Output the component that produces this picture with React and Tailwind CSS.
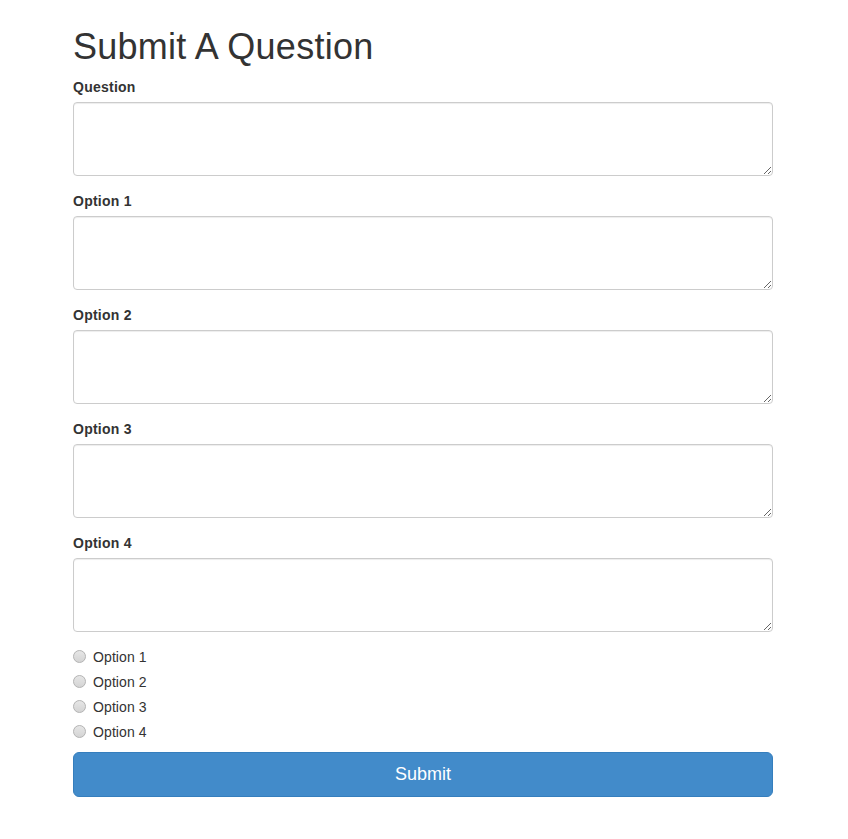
import React, { useState } from 'react';

const fields = ['Question', 'Option 1', 'Option 2', 'Option 3', 'Option 4'];
const choices = ['Option 1', 'Option 2', 'Option 3', 'Option 4'];

export default function App() {
  const [answer, setAnswer] = useState(null);

  return (
    <div className="min-h-screen bg-white text-[#333] font-['Liberation_Sans',Arial,sans-serif] text-[14px] leading-[20px]">
      <div className="w-[700px] ml-[73px] pt-[27px]">
        <h1 className="text-[36px] leading-[39.6px] font-medium tracking-[0.25px] mb-[10px]">Submit A Question</h1>

        <form onSubmit={(e) => e.preventDefault()}>
          {fields.map((f) => (
            <div key={f} className="mb-[15px]">
              <label className="block font-bold tracking-[0.25px] mb-[5px]">{f}</label>
              <textarea
                rows={3}
                className="block w-full h-[74px] px-3 py-1.5 border border-[#ccc] rounded-[4px] shadow-[inset_0_1px_1px_rgba(0,0,0,0.075)] bg-white text-[14px] leading-[20px] outline-none focus:border-[#66afe9]"
              />
            </div>
          ))}

          <div className="flex flex-col gap-[5px] mb-[10px]">
            {choices.map((c) => (
              <label key={c} className="flex items-center h-[20px] cursor-pointer">
                <span className="w-[20px] flex items-center">
                  <input
                    type="radio"
                    name="answer"
                    checked={answer === c}
                    onChange={() => setAnswer(c)}
                    className="appearance-none w-[13px] h-[13px] m-0 rounded-full border border-[#b5b5b5] bg-[#dcdcdc] bg-gradient-to-b from-[#e6e6e6] to-[#d4d4d4] checked:bg-[#428bca] checked:from-[#4f97d6] checked:to-[#357ebd] checked:border-[#357ebd]"
                  />
                </span>
                <span className="tracking-[0.1px]">{c}</span>
              </label>
            ))}
          </div>

          <button
            type="submit"
            className="block w-full h-[45px] rounded-[6px] bg-[#428bca] border border-[#357ebd] text-white text-[18px] leading-[24px] hover:bg-[#3276b1]"
          >
            Submit
          </button>
        </form>
      </div>
    </div>
  );
}
